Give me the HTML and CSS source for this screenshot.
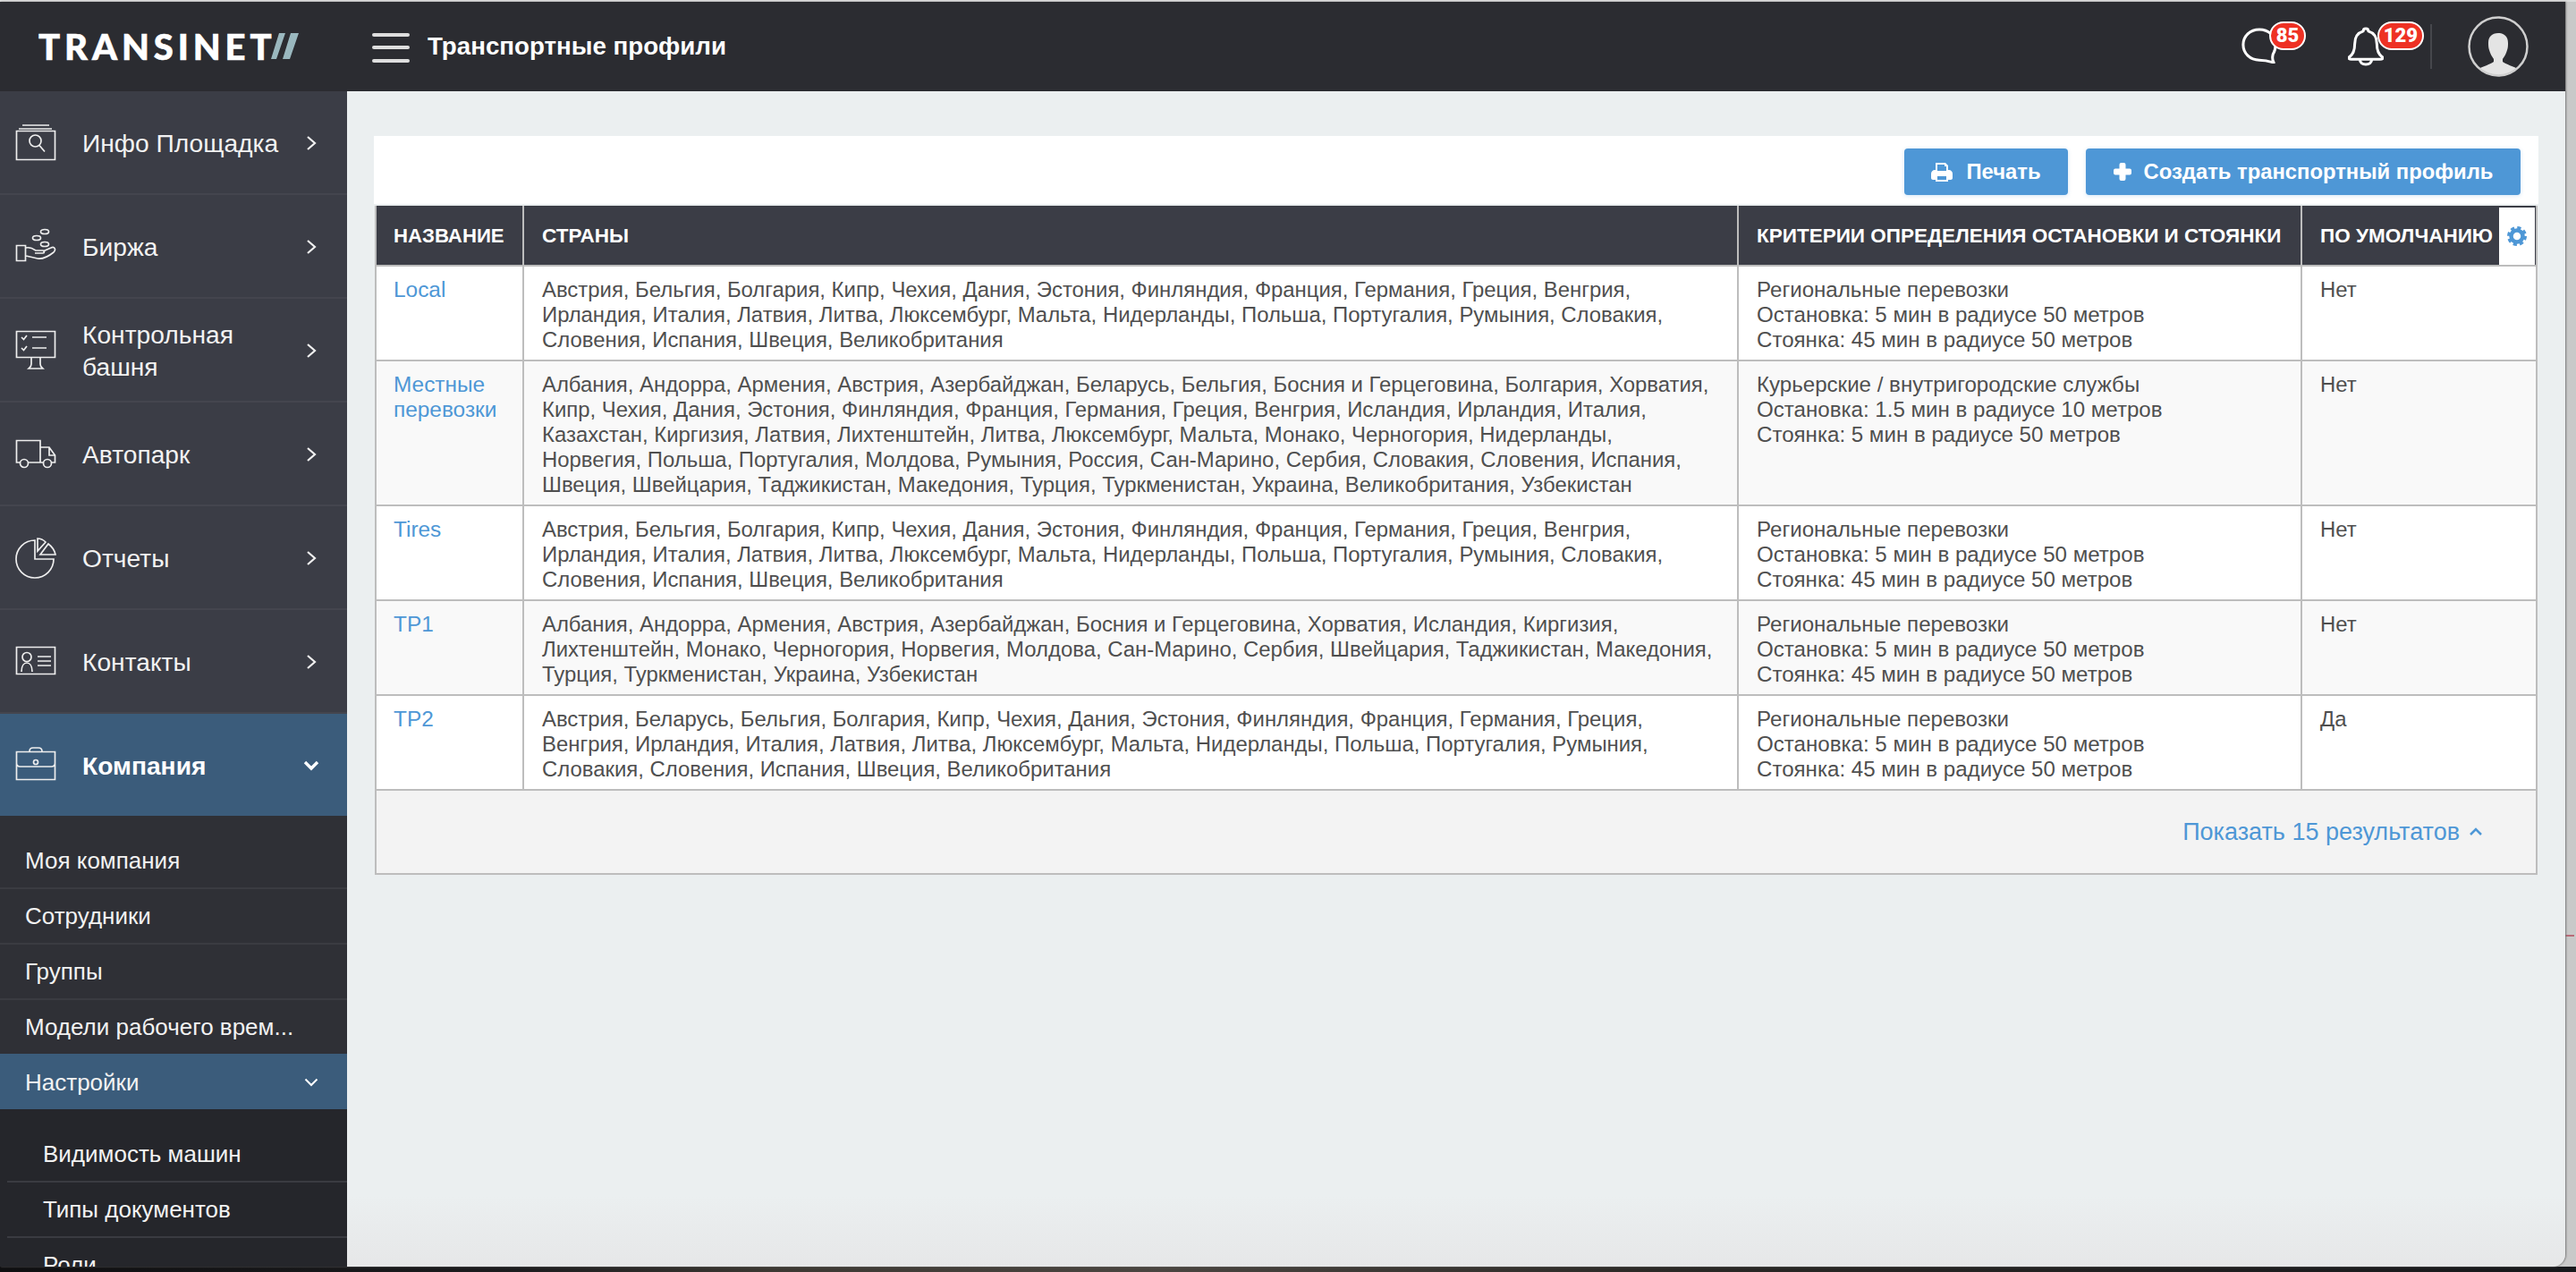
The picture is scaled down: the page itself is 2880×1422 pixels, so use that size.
FILE: index.html
```html
<!DOCTYPE html>
<html lang="ru">
<head>
<meta charset="utf-8">
<title>Транспортные профили</title>
<link rel="stylesheet" href="styles.css">
</head>
<body>
<div class="topline"></div>
<div class="desktop">
  <div class="window">
    <header class="topbar">
      <div class="brand">
        <span class="logo">TRANSINET</span>
        <svg class="slashes" width="32" height="30" viewBox="0 0 32 30"><path d="M9 0h7L6 29H0zM22 0h9L21 29H13z" fill="#9ab8bf"/></svg>
      </div>
      <div class="burger"><span></span><span></span><span></span></div>
      <h1 class="page-title">Транспортные профили</h1>
      <div class="top-actions">
        <div class="notify notify-chat">
          <svg width="40" height="40" viewBox="0 0 42 42"><path d="M21 2C10 2 2 10 2 20c0 10 8 18 19 18 5 0 11 1 17 3-2-3-2-6-1-10 2-3 3-7 3-11C40 10 32 2 21 2z" fill="none" stroke="#fff" stroke-width="3.2" stroke-linejoin="round"/></svg>
          <span class="badge badge-chat">85</span>
        </div>
        <div class="notify notify-bell">
          <svg width="40" height="44" viewBox="0 0 42 46"><path d="M21 2c-2 0-3 1-3 3-7 2-10 8-10 15 0 8-2 12-6 15-2 2 0 3 2 3h34c2 0 4-1 2-3-4-3-6-7-6-15 0-7-3-13-10-15 0-2-1-3-3-3zM14 38c0 4 3 6 7 6s7-2 7-6" fill="none" stroke="#fff" stroke-width="3.2" stroke-linejoin="round"/></svg>
          <span class="badge badge-bell">129</span>
        </div>
        <div class="top-divider"></div>
        <svg class="avatar" width="68" height="68" viewBox="0 0 68 68"><defs><clipPath id="avatar-clip"><circle cx="34" cy="34" r="32"/></clipPath></defs><g clip-path="url(#avatar-clip)"><path d="M34 19c-7 0-11 4-11 11 0 3 0 5 1 8 1 4 3 7 5 10v3c-3 3-13 5-18 9-2 2-3 5-3 8h52c0-3-1-6-3-8-5-4-15-6-18-9v-3c2-3 4-6 5-10 1-3 1-5 1-8 0-7-4-11-11-11z" fill="#e4e4e4"/></g><circle cx="34" cy="34" r="32.5" fill="none" stroke="#cfcfcf" stroke-width="2.5"/></svg>
      </div>
    </header>
    <div class="body-row">
      <nav class="sidebar">
        <ul class="menu">
          <li class="menu-item">
            <svg class="menu-icon" viewBox="0 0 46 46"><path d="M8 3h30M4 7h37M1.500 9.500h43v32h-43z"/><circle cx="22.500" cy="20.500" r="6.500"/><path d="M27 25.500l6 7"/></svg>
            <span class="menu-label">Инфо Площадка</span>
            <svg class="chev" width="12" height="18" viewBox="0 0 12 18"><path d="M2 2l8 7-8 7"/></svg>
          </li>
          <li class="menu-item">
            <svg class="menu-icon" viewBox="0 0 46 46"><ellipse cx="33" cy="6" rx="4.500" ry="2.500"/><ellipse cx="24" cy="13" rx="4.500" ry="2.500"/><ellipse cx="33" cy="20" rx="4.500" ry="2.500"/><path d="M1.500 21.500h10v17h-10zM12 24c4-1 8 1 11 3h8c2 0 2 3 0 3h-9M31 28l9-4c4-2 6 2 3 5-5 4-12 8-18 7l-13-3"/></svg>
            <span class="menu-label">Биржа</span>
            <svg class="chev" width="12" height="18" viewBox="0 0 12 18"><path d="M2 2l8 7-8 7"/></svg>
          </li>
          <li class="menu-item">
            <svg class="menu-icon" viewBox="0 0 46 46"><path d="M1.500 1.500h43v29h-43zM7 8l2.500 2.500L13 6M7 20l2.500 2.500L13 18M19 8h16M19 20h16M18 31v7c0 3-2 4-3 5h16c-1-1-3-2-3-5v-7"/></svg>
            <span class="menu-label">Контрольная<br>башня</span>
            <svg class="chev" width="12" height="18" viewBox="0 0 12 18"><path d="M2 2l8 7-8 7"/></svg>
          </li>
          <li class="menu-item">
            <svg class="menu-icon" viewBox="0 0 46 46"><path d="M5.500 32H1.500V7.500h26.500V32H14.500M28 15h10l6.500 9v8H40.500M31.500 32H28M38 15v9h6.500"/><circle cx="10" cy="33" r="4.500"/><circle cx="36" cy="33" r="4.500"/></svg>
            <span class="menu-label">Автопарк</span>
            <svg class="chev" width="12" height="18" viewBox="0 0 12 18"><path d="M2 2l8 7-8 7"/></svg>
          </li>
          <li class="menu-item">
            <svg class="menu-icon" viewBox="0 0 46 46"><path d="M22 3A21 21 0 1 0 43 24H22zM25 1v14l9-10c-3-3-6-4-9-4zM28 19l9-12c4 3 7 7 8 12z"/></svg>
            <span class="menu-label">Отчеты</span>
            <svg class="chev" width="12" height="18" viewBox="0 0 12 18"><path d="M2 2l8 7-8 7"/></svg>
          </li>
          <li class="menu-item">
            <svg class="menu-icon" viewBox="0 0 46 46"><path d="M1.500 6.500h43v30h-43zM7 34c0-7 3-10 6-10s6 3 6 10M25 17h15M25 22h15M25 27h15"/><circle cx="13" cy="17.500" r="5"/></svg>
            <span class="menu-label">Контакты</span>
            <svg class="chev" width="12" height="18" viewBox="0 0 12 18"><path d="M2 2l8 7-8 7"/></svg>
          </li>
          <li class="menu-item menu-item-open">
            <svg class="menu-icon" viewBox="0 0 46 46"><path d="M1.500 7.500h43v31h-43zM16 7c0-3 1-4 4-4h6c3 0 4 1 4 4M1.500 20c0 3 2 4 4 4h35c2 0 4-1 4-4"/><circle cx="23" cy="19" r="2.500"/></svg>
            <span class="menu-label">Компания</span>
            <svg class="chev chev-down" width="18" height="12" viewBox="0 0 18 12"><path d="M2 2l7 7 7-7"/></svg>
          </li>
        </ul>
        <ul class="submenu">
          <li class="sub-item">Моя компания</li>
          <li class="sub-item">Сотрудники</li>
          <li class="sub-item">Группы</li>
          <li class="sub-item sub-item-last">Модели рабочего врем...</li>
          <li class="sub-item sub-item-open">Настройки
            <svg class="chev-thin" width="16" height="10" viewBox="0 0 16 10"><path d="M1.500 1.500L8 8l6.500-6.500"/></svg>
          </li>
        </ul>
        <ul class="subsub">
          <li class="subsub-item">Видимость машин</li>
          <li class="subsub-item">Типы документов</li>
          <li class="subsub-item">Роли</li>
        </ul>
      </nav>
      <main class="content">
        <section class="panel">
          <div class="toolbar">
            <button class="btn btn-print">
              <svg width="24" height="21" viewBox="0 0 24 21"><path d="M5 0h11l3 3v5h1c2 0 4 2 4 4v5c0 1-1 2-2 2h-3v2H5v-2H2c-1 0-2-1-2-2v-5c0-2 2-4 4-4h1zM7 2v7h10V4h-2V2zM7 15v4h10v-4z" fill="#fff" fill-rule="evenodd"/></svg>
              Печать
            </button>
            <button class="btn btn-create">
              <svg width="20" height="20" viewBox="0 0 20 20"><path d="M6.500 2a2 2 0 0 1 2-2h3a2 2 0 0 1 2 2v4.500H18a2 2 0 0 1 2 2v3a2 2 0 0 1-2 2h-4.500V18a2 2 0 0 1-2 2h-3a2 2 0 0 1-2-2v-4.500H2a2 2 0 0 1-2-2v-3a2 2 0 0 1 2-2h4.500z" fill="#fff"/></svg>
              Создать транспортный профиль
            </button>
          </div>
          <table class="profiles">
            <colgroup><col class="col-name"><col class="col-countries"><col class="col-criteria"><col class="col-default"></colgroup>
            <thead>
              <tr>
                <th>НАЗВАНИЕ</th>
                <th>СТРАНЫ</th>
                <th>КРИТЕРИИ ОПРЕДЕЛЕНИЯ ОСТАНОВКИ И СТОЯНКИ</th>
                <th class="th-default">ПО УМОЛЧАНИЮ
                  <span class="cog"><svg width="22" height="22" viewBox="0 0 22 22"><circle cx="11" cy="11" r="6.500" fill="none" stroke="#4e97d6" stroke-width="4.500"/><circle cx="11" cy="11" r="9" fill="none" stroke="#4e97d6" stroke-width="4" stroke-dasharray="4 3.070"/></svg></span>
                </th>
              </tr>
            </thead>
            <tbody>
              <tr>
                <td><a class="link">Local</a></td>
                <td>Австрия, Бельгия, Болгария, Кипр, Чехия, Дания, Эстония, Финляндия, Франция, Германия, Греция, Венгрия,<br>Ирландия, Италия, Латвия, Литва, Люксембург, Мальта, Нидерланды, Польша, Португалия, Румыния, Словакия,<br>Словения, Испания, Швеция, Великобритания</td>
                <td>Региональные перевозки<br>Остановка: 5 мин в радиусе 50 метров<br>Стоянка: 45 мин в радиусе 50 метров</td>
                <td>Нет</td>
              </tr>
              <tr>
                <td><a class="link">Местные<br>перевозки</a></td>
                <td>Албания, Андорра, Армения, Австрия, Азербайджан, Беларусь, Бельгия, Босния и Герцеговина, Болгария, Хорватия,<br>Кипр, Чехия, Дания, Эстония, Финляндия, Франция, Германия, Греция, Венгрия, Исландия, Ирландия, Италия,<br>Казахстан, Киргизия, Латвия, Лихтенштейн, Литва, Люксембург, Мальта, Монако, Черногория, Нидерланды,<br>Норвегия, Польша, Португалия, Молдова, Румыния, Россия, Сан-Марино, Сербия, Словакия, Словения, Испания,<br>Швеция, Швейцария, Таджикистан, Македония, Турция, Туркменистан, Украина, Великобритания, Узбекистан</td>
                <td>Курьерские / внутригородские службы<br>Остановка: 1.5 мин в радиусе 10 метров<br>Стоянка: 5 мин в радиусе 50 метров</td>
                <td>Нет</td>
              </tr>
              <tr>
                <td><a class="link">Tires</a></td>
                <td>Австрия, Бельгия, Болгария, Кипр, Чехия, Дания, Эстония, Финляндия, Франция, Германия, Греция, Венгрия,<br>Ирландия, Италия, Латвия, Литва, Люксембург, Мальта, Нидерланды, Польша, Португалия, Румыния, Словакия,<br>Словения, Испания, Швеция, Великобритания</td>
                <td>Региональные перевозки<br>Остановка: 5 мин в радиусе 50 метров<br>Стоянка: 45 мин в радиусе 50 метров</td>
                <td>Нет</td>
              </tr>
              <tr>
                <td><a class="link">TP1</a></td>
                <td>Албания, Андорра, Армения, Австрия, Азербайджан, Босния и Герцеговина, Хорватия, Исландия, Киргизия,<br>Лихтенштейн, Монако, Черногория, Норвегия, Молдова, Сан-Марино, Сербия, Швейцария, Таджикистан, Македония,<br>Турция, Туркменистан, Украина, Узбекистан</td>
                <td>Региональные перевозки<br>Остановка: 5 мин в радиусе 50 метров<br>Стоянка: 45 мин в радиусе 50 метров</td>
                <td>Нет</td>
              </tr>
              <tr>
                <td><a class="link">TP2</a></td>
                <td>Австрия, Беларусь, Бельгия, Болгария, Кипр, Чехия, Дания, Эстония, Финляндия, Франция, Германия, Греция,<br>Венгрия, Ирландия, Италия, Латвия, Литва, Люксембург, Мальта, Нидерланды, Польша, Португалия, Румыния,<br>Словакия, Словения, Испания, Швеция, Великобритания</td>
                <td>Региональные перевозки<br>Остановка: 5 мин в радиусе 50 метров<br>Стоянка: 45 мин в радиусе 50 метров</td>
                <td>Да</td>
              </tr>
            </tbody>
          </table>
          <div class="table-footer">
            <a class="link show-more">Показать 15 результатов
              <svg width="16" height="10" viewBox="0 0 16 10"><path d="M2 8l6-6 6 6" fill="none" stroke="#4e97d6" stroke-width="2.500"/></svg>
            </a>
          </div>
        </section>
      </main>
    </div>
  </div>
  <div class="strip"><div class="strip-mark"></div></div>
</div>
<div class="dock"></div>
</body>
</html>
```
FILE: styles.css
```css
* { box-sizing: border-box; }
html, body { margin: 0; padding: 0; height: 1422px; overflow: hidden; }
body {
  font-family: "Liberation Sans", Arial, sans-serif;
  background: #15161a;
  display: flex;
  flex-direction: column;
}
ul { list-style: none; margin: 0; padding: 0; }

.topline { height: 2px; background: #dcdcdc; flex: none; }
.desktop { display: flex; height: 1414px; flex: none; background: #c9c9c9; }
.window {
  width: 2868px;
  height: 1414px;
  display: flex;
  flex-direction: column;
  overflow: hidden;
  border-bottom-right-radius: 14px;
  box-shadow: 1px 0 2px #777;
  position: relative;
}
.strip { width: 12px; background: #c9c9c9; }
.strip-mark { width: 10px; height: 2px; margin-top: 1043px; background: #b86b78; }
.dock {
  height: 6px;
  flex: none;
  background: linear-gradient(90deg, #0f0f11 0, #1c1c1e 20%, #3c3832 30%, #4a4540 45%, #2a2825 65%, #17181b 100%);
}

/* top bar */
.topbar {
  height: 100px;
  flex: none;
  background: #2b2c31;
  display: flex;
  align-items: center;
  color: #fff;
}
.brand { width: 388px; padding-left: 43px; display: flex; align-items: center; flex: none; height: 100%; padding-bottom: 1px; }
.logo {
  font-family: "Lato", "Liberation Sans", sans-serif;
  font-weight: 900;
  font-size: 40px;
  line-height: 40px;
  letter-spacing: 4.9px;
  -webkit-text-stroke: 0.6px #fff;
}
.slashes { flex: none; margin-left: -5px; }
.burger { width: 42px; margin-left: 28px; display: flex; flex-direction: column; gap: 10.500px; flex: none; margin-top: 2px; }
.burger span { display: block; height: 4px; border-radius: 2px; background: #dedede; }
.page-title { margin: 0 0 0 20px; font-size: 27.700px; font-weight: 700; line-height: 34px; color: #fff; }
.top-actions { margin-left: auto; display: flex; align-items: center; padding-right: 41px; }
.notify { position: relative; }
.notify svg { display: block; }
.notify-chat { margin-right: 79px; margin-top: -3px; }
.notify-bell { margin-right: 52px; }
.badge {
  position: absolute;
  height: 32px;
  border-radius: 16px;
  background: #ee3124;
  border: 2px solid #fff;
  color: #fff;
  font-family: "Roboto", "Liberation Sans", sans-serif;
  font-weight: 900;
  font-size: 22px;
  line-height: 28px;
  text-align: center;
}
.badge-chat { width: 41px; left: 31px; top: -7px; }
.badge-bell { width: 52px; left: 33px; top: -6px; }
.top-divider { width: 2px; height: 50px; background: #46474c; margin-right: 40px; }
.avatar { display: block; }

/* layout */
.body-row { flex: 1; display: flex; min-height: 0; }

/* sidebar */
.sidebar { width: 388px; flex: none; background: #25262b; overflow: hidden; }
.menu-item {
  height: 116px;
  display: flex;
  align-items: center;
  padding: 2px 0 0 17px;
  background: #3b3d46;
  border-bottom: 2px solid #44454e;
  color: #f2f2f2;
  font-size: 28.200px;
  line-height: 36px;
}
.menu-icon { width: 46px; height: 46px; flex: none; fill: none; stroke: #eeeeee; stroke-width: 1.7; }
.menu-label { margin-left: 29px; flex: 1; }
.chev { flex: none; margin-right: 34px; fill: none; stroke: #f0f0f0; stroke-width: 2.2; }
.menu-item-open {
  height: 114px;
  background: #3b5c7b;
  border-bottom: 0;
  color: #fff;
}
.menu-item-open .menu-label { font-weight: 700; }
.chev-down { margin-right: 31px; stroke: #fff; stroke-width: 3.4; }
.submenu { background: #2f3036; padding-top: 20px; }
.sub-item {
  height: 62px;
  display: flex;
  align-items: center;
  justify-content: space-between;
  padding: 0 32px 0 28px;
  border-bottom: 2px solid #3a3b41;
  color: #f2f2f2;
  font-size: 26px;
}
.sub-item-last { border-bottom: 0; height: 60px; }
.sub-item-open { background: #3b5c7b; border-bottom: 0; padding-top: 2px; }
.chev-thin { fill: none; stroke: #fff; stroke-width: 2; }
.subsub { padding: 20px 0 0 8px; }
.subsub-item {
  height: 62px;
  display: flex;
  align-items: center;
  padding-left: 40px;
  border-bottom: 2px solid #3a3b41;
  color: #f2f2f2;
  font-size: 26px;
}

/* content */
.content {
  flex: 1;
  padding: 50px 30px 0;
  background: linear-gradient(180deg, #ebeff0 0, #ebeff0 94%, #e6e7e8 100%);
}
.panel { width: 2420px; }
.toolbar {
  height: 76px;
  background: #fff;
  display: flex;
  justify-content: flex-end;
  align-items: flex-start;
  gap: 20px;
  padding: 14px 20px 0 0;
}
.btn {
  height: 52px;
  border: 0;
  border-radius: 4px;
  background: #4e97d6;
  color: #fff;
  font-family: "Liberation Sans", Arial, sans-serif;
  font-weight: 700;
  font-size: 23.800px;
  display: flex;
  align-items: center;
  justify-content: center;
  box-shadow: 0 1px 4px rgba(78, 151, 214, .25);
}
.btn-print { width: 183px; gap: 15px; }
.btn-create { width: 486px; gap: 14px; }

.profiles {
  width: 2418px;
  margin: 2px 1px 0;
  table-layout: fixed;
  border-collapse: separate;
  border-spacing: 0;
  border-left: 2px solid #bdbdbd;
  font-size: 23.900px;
  line-height: 28px;
  color: #4f4f4f;
}
.col-name { width: 165px; }
.col-countries { width: 1358px; }
.col-criteria { width: 630px; }
.col-default { width: 263px; }
.profiles th {
  height: 68px;
  padding: 2px 0 0 20px;
  background: #3b3d46;
  color: #fff;
  font-size: 22.500px;
  font-weight: 700;
  text-align: left;
  white-space: nowrap;
  border-right: 2px solid #bdbdbd;
  border-bottom: 2px solid #bdbdbd;
}
.profiles th:first-child, .profiles td:first-child { padding-left: 19px; }
.profiles th:first-child { font-size: 22.200px; }
.th-default { position: relative; }
.cog {
  position: absolute;
  right: 1px;
  top: 2px;
  bottom: 0;
  width: 40px;
  background: #fff;
  display: flex;
  align-items: center;
  justify-content: center;
}
.profiles td {
  padding: 12px 0 8px 20px;
  vertical-align: top;
  white-space: nowrap;
  border-right: 2px solid #bdbdbd;
  border-bottom: 2px solid #bdbdbd;
  background: #fff;
}
.profiles td:first-child { font-size: 24.400px; }
.profiles td:nth-child(3) { font-size: 24.100px; }
.profiles tbody tr:nth-child(even) td { background: #f9f9f9; }
.link { color: #4e97d6; }
.table-footer {
  width: 2418px;
  height: 94px;
  margin-left: 1px;
  background: #f3f3f3;
  border: 2px solid #bdbdbd;
  border-top: 0;
  display: flex;
  align-items: center;
  justify-content: flex-end;
  padding-right: 59px;
  font-size: 27px;
}
.show-more { display: flex; align-items: center; gap: 10px; }
```
